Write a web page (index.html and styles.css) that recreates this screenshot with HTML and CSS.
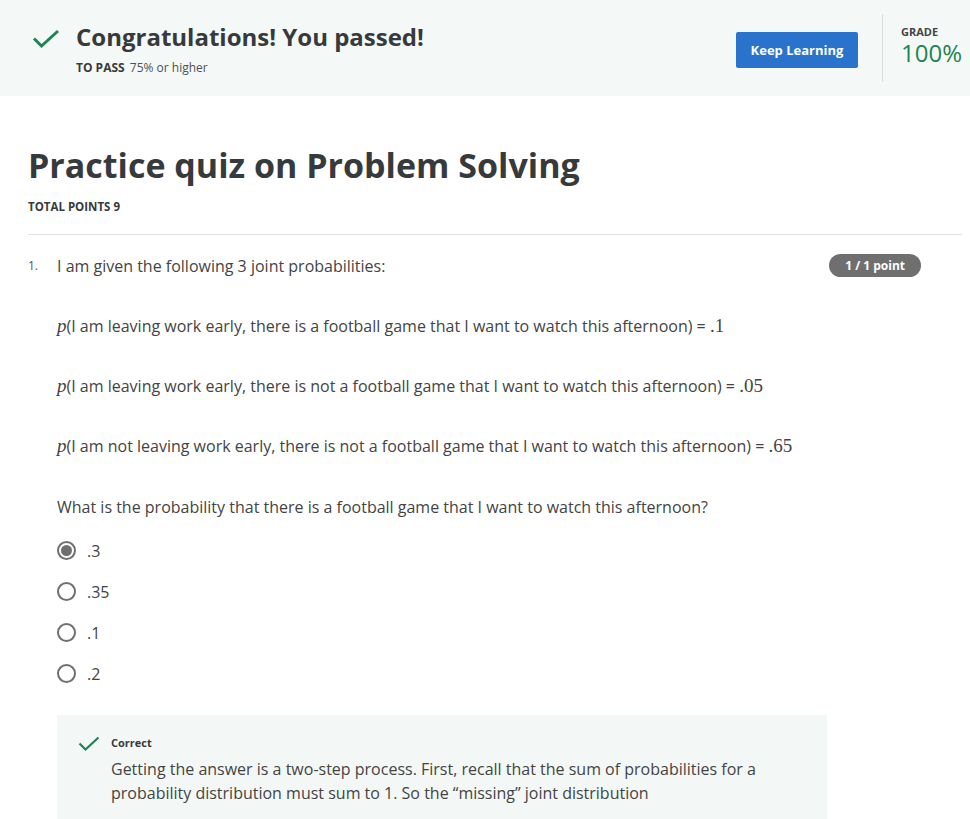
FILE: index.html
```html
<!DOCTYPE html>
<html>
<head>
<meta charset="utf-8">
<link rel="stylesheet" href="styles.css">
</head>
<body>
<header class="banner">
  <div class="banner-left">
    <svg class="check-big" width="28" height="20" viewBox="0 0 28 20"><path d="M2 9.5 L9.5 17 L26 2" fill="none" stroke="#1f8354" stroke-width="3"/></svg>
    <div class="banner-text">
      <h1 class="banner-title">Congratulations! You passed!</h1>
      <div class="pass-line"><span class="pass-label">TO PASS</span> 75% or higher</div>
    </div>
  </div>
  <div class="banner-right">
    <button class="keep-btn">Keep Learning</button>
    <div class="divider"></div>
    <div class="grade">
      <div class="grade-label">GRADE</div>
      <div class="grade-value">100%</div>
    </div>
  </div>
</header>

<main class="content">
  <h2 class="quiz-title">Practice quiz on Problem Solving</h2>
  <div class="total-points">TOTAL POINTS 9</div>
  <hr class="rule">

  <section class="question">
    <div class="q-head">
      <span class="q-num">1.</span>
      <div class="q-text">I am given the following 3 joint probabilities:</div>
      <span class="badge">1 / 1 point</span>
    </div>
    <div class="q-body">
      <p class="prob"><span class="math">p</span>(I am leaving work early, there is a football game that I want to watch this afternoon) = <span class="num">.1</span></p>
      <p class="prob"><span class="math">p</span>(I am leaving work early, there is not a football game that I want to watch this afternoon) = <span class="num">.05</span></p>
      <p class="prob"><span class="math">p</span>(I am not leaving work early, there is not a football game that I want to watch this afternoon) = <span class="num">.65</span></p>
      <p class="ask">What is the probability that there is a football game that I want to watch this afternoon?</p>
      <ul class="options">
        <li class="option"><span class="radio checked"></span>.3</li>
        <li class="option"><span class="radio"></span>.35</li>
        <li class="option"><span class="radio"></span>.1</li>
        <li class="option"><span class="radio"></span>.2</li>
      </ul>
      <div class="feedback">
        <svg class="check-small" width="22" height="16" viewBox="0 0 22 16"><path d="M1.5 7.5 L7.5 13.5 L20.5 1.5" fill="none" stroke="#1f8354" stroke-width="2.2"/></svg>
        <div class="fb-text">
          <div class="fb-label">Correct</div>
          <p class="fb-body">Getting the answer is a two-step process. First, recall that the sum of probabilities for a probability distribution must sum to 1. So the “missing” joint distribution</p>
        </div>
      </div>
    </div>
  </section>
</main>
</body>
</html>
```

FILE: styles.css
```css
* { box-sizing: border-box; }
body {
  margin: 0;
  font-family: "Open Sans", "Noto Sans", sans-serif;
  color: #373a3c;
  background: #fff;
}
.banner {
  background: #f4f9f8;
  height: 96px;
  display: flex;
  justify-content: space-between;
  padding: 0 8px 0 32px;
}
.banner-left {
  display: flex;
  align-items: flex-start;
  padding-top: 29px;
}
.check-big { margin-right: 16px; flex-shrink: 0; }
.banner-text { margin-top: -8px; }
.banner-title {
  margin: 0;
  font-size: 24px;
  font-weight: 700;
  line-height: 32px;
  color: #373a3c;
}
.pass-line {
  margin-top: 7px;
  font-size: 12px;
  line-height: 16px;
  color: #505050;
}
.pass-label { font-weight: 700; color: #373a3c; margin-right: 2px; }
.banner-right {
  display: flex;
  align-items: flex-start;
}
.keep-btn {
  margin-top: 32px;
  width: 122px;
  height: 36px;
  background: #2a73cc;
  color: #fff;
  border: none;
  border-radius: 2px;
  font-family: "Open Sans", sans-serif;
  font-weight: 700;
  font-size: 13px;
}
.divider {
  width: 1px;
  height: 68px;
  margin-top: 14px;
  margin-left: 24px;
  background: #dcdcdc;
}
.grade { margin-left: 18px; padding-top: 24px; }
.grade-label { font-size: 11px; font-weight: 700; color: #444; line-height: 16px; }
.grade-value { font-size: 24px; color: #1f8354; line-height: 26px; }

.content { padding: 0 8px 0 28px; }
.quiz-title {
  margin: 0;
  padding-top: 46px;
  font-size: 34px;
  font-weight: 700;
  line-height: 46px;
  color: #373a3c;
}
.total-points {
  margin-top: 11px;
  font-size: 11.5px;
  font-weight: 700;
  color: #373a3c;
}
.rule {
  margin: 20px 0 0 0;
  border: none;
  border-top: 1px solid #e1e1e1;
}
.question { padding-top: 20px; }
.q-head {
  display: flex;
  align-items: flex-start;
}
.q-num { width: 29px; font-size: 12px; line-height: 22px; color: #555; }
.q-text { flex: 1; font-size: 16px; line-height: 22px; color: #444; }
.badge {
  margin-right: 41px;
  margin-top: -1px;
  background: #6f6f6f;
  color: #fff;
  font-size: 12px;
  font-weight: 700;
  border-radius: 12px;
  padding: 3px 16px;
  line-height: 17px;
}
.q-body { padding-left: 29px; }
.prob {
  margin: 38px 0 0 0;
  font-size: 16px;
  line-height: 22px;
  color: #444;
}
.math {
  font-family: "Liberation Serif", "DejaVu Serif", serif;
  font-style: italic;
  font-size: 19px;
}
.num {
  font-family: "Liberation Serif", "DejaVu Serif", serif;
  font-size: 19px;
}
.ask {
  margin: 39px 0 0 0;
  font-size: 16px;
  line-height: 22px;
  color: #444;
}
.options { list-style: none; margin: 12px 0 0 0; padding: 0; }
.option {
  display: flex;
  align-items: center;
  height: 41px;
  font-size: 16px;
  color: #444;
}
.radio {
  width: 19px;
  height: 19px;
  border: 2px solid #6f6f6f;
  border-radius: 50%;
  margin-right: 11px;
  position: relative;
}
.radio.checked::after {
  content: "";
  position: absolute;
  left: 2px;
  top: 2px;
  width: 11px;
  height: 11px;
  border-radius: 50%;
  background: #6f6f6f;
}
.feedback {
  margin-top: 21px;
  width: 770px;
  background: #f3f8f6;
  display: flex;
  align-items: flex-start;
  padding: 21px 20px 14px 21px;
}
.check-small { margin-right: 11px; flex-shrink: 0; }
.fb-label { font-size: 11px; font-weight: 700; color: #373a3c; line-height: 14px; }
.fb-body {
  margin: 7px 0 0 0;
  font-size: 16px;
  line-height: 24px;
  color: #444;
}
```
